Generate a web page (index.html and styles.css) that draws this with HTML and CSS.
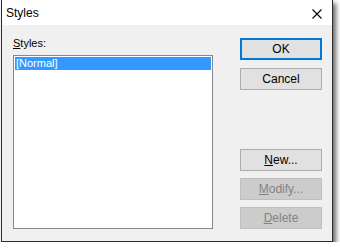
FILE: index.html
```html
<!DOCTYPE html>
<html lang="en">
<head>
    <meta charset="UTF-8">
    <title>Styles</title>
    <link rel="stylesheet" href="styles.css">
</head>
<body>
    <div class="window">
        <div class="titlebar">
            <span class="title">Styles</span>
            <svg class="close" width="10" height="10" viewBox="0 0 10 10">
                <path d="M0.5 0.5 L9.5 9.5 M9.5 0.5 L0.5 9.5" stroke="#000" stroke-width="1.1" fill="none"/>
            </svg>
        </div>
        <div class="content">
            <div class="left">
                <div class="label"><u>S</u>tyles:</div>
                <div class="listbox">
                    <div class="item selected">[Normal]</div>
                </div>
            </div>
            <div class="buttons">
                <button class="btn default">OK</button>
                <button class="btn">Cancel</button>
                <div class="spacer"></div>
                <button class="btn"><u>N</u>ew...</button>
                <button class="btn" disabled><u>M</u>odify...</button>
                <button class="btn" disabled><u>D</u>elete</button>
            </div>
        </div>
    </div>
</body>
</html>
```

FILE: styles.css
```css
body {
    margin: 0;
    background: #fff;
    font-family: "Liberation Sans", Arial, sans-serif;
    font-size: 11px;
}
.window {
    margin: -1px 0 0 1px;
    width: 330px;
    height: 241px;
    border: 1px solid #2b2b2b;
    background: #f0f0f0;
    box-shadow: 3px 4px 5px rgba(0, 0, 0, 0.6);
    display: flex;
    flex-direction: column;
}
.titlebar {
    height: 25px;
    background: #fff;
    display: flex;
    align-items: center;
    justify-content: space-between;
    padding: 0 10px 0 4px;
}
.title {
    font-size: 12px;
    color: #000;
}
.close {
    display: block;
    margin-top: 2px;
}
.content {
    flex: 1;
    display: flex;
    padding: 12px 10px 12px 11px;
}
.left {
    width: 200px;
    display: flex;
    flex-direction: column;
}
.label {
    height: 13px;
    line-height: 13px;
    margin-bottom: 5px;
    color: #000;
}
.listbox {
    flex: 1;
    background: #fff;
    border: 1px solid #828790;
    padding: 1px;
}
.item {
    height: 13px;
    line-height: 13px;
    padding-left: 1px;
}
.selected {
    background: #3399ff;
    color: #fff;
}
.buttons {
    margin-left: 27px;
    padding-top: 1px;
    width: 82px;
    display: flex;
    flex-direction: column;
}
.btn {
    height: 22px;
    width: 82px;
    margin: 0 0 7px 0;
    padding: 0;
    background: #e1e1e1;
    border: 1px solid #adadad;
    font-family: "Liberation Sans", Arial, sans-serif;
    font-size: 12px;
    color: #000;
}
.btn:last-child {
    margin-bottom: 0;
}
.default {
    border: 2px solid #0078d7;
    margin-bottom: 8px;
}
.btn:disabled {
    background: #cccccc;
    border-color: #bfbfbf;
    color: #838383;
}
.spacer {
    flex: 1;
}
```
